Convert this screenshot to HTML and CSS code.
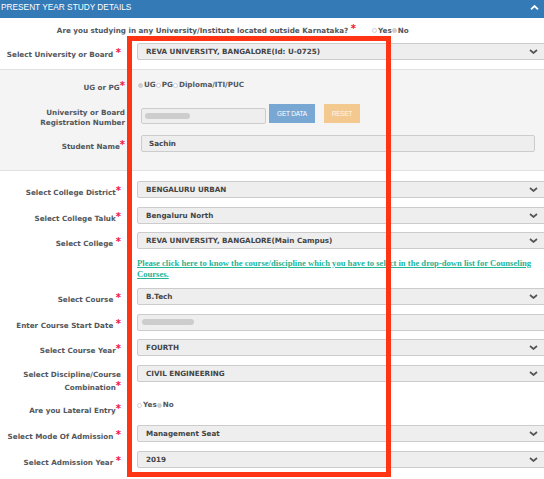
FILE: index.html
```html
<!DOCTYPE html>
<html>
<head>
<meta charset="utf-8">
<title>Present Year Study Details</title>
<link rel="stylesheet" href="styles.css">
</head>
<body>
<div class="panel">
  <div class="panel-head">
    <span class="title">PRESENT YEAR STUDY DETAILS</span>
    <svg class="collapse" viewBox="0 0 9 5"><polyline points="1,4.3 4.5,1 8,4.3" fill="none" stroke="#fff" stroke-width="1.8"/></svg>
  </div>

  <div class="q-row">
    <div class="q-text">Are you studying in any University/Institute located outside Karnataka? <span class="req">*</span></div>
    <div class="radios q-radios"><span class="radio"></span>Yes<span class="radio on"></span>No</div>
  </div>

  <div class="row row-univ">
    <div class="lbl">Select University or Board <span class="req">*</span></div>
    <div class="fld"><div class="sel"><span>REVA UNIVERSITY, BANGALORE(Id: U-0725)</span><svg class="chev" viewBox="0 0 9 5"><polyline points="1,1 4.5,4 8,1" fill="none" stroke="#555" stroke-width="1.7"/></svg></div></div>
  </div>

  <div class="gray">
    <div class="g-row g-ug">
      <div class="g-lbl">UG or PG<span class="req">*</span></div>
      <div class="g-fld"><div class="radios ug-radios"><span class="radio on"></span>UG<span class="radio"></span>PG<span class="radio"></span>Diploma/ITI/PUC</div></div>
    </div>
    <div class="g-row g-reg">
      <div class="g-lbl">University or Board<br>Registration Number</div>
      <div class="g-fld reg-fld">
        <div class="inp inp-reg"><span class="pill pill-reg"></span></div>
        <div class="btn btn-get">GET DATA</div>
        <div class="btn btn-reset">RESET</div>
      </div>
    </div>
    <div class="g-row g-name">
      <div class="g-lbl">Student Name<span class="req">*</span></div>
      <div class="g-fld"><div class="inp inp-name">Sachin</div></div>
    </div>
  </div>

  <div class="row">
    <div class="lbl">Select College District<span class="req">*</span></div>
    <div class="fld"><div class="sel"><span>BENGALURU URBAN</span><svg class="chev" viewBox="0 0 9 5"><polyline points="1,1 4.5,4 8,1" fill="none" stroke="#555" stroke-width="1.7"/></svg></div></div>
  </div>
  <div class="row">
    <div class="lbl">Select College Taluk<span class="req">*</span></div>
    <div class="fld"><div class="sel"><span>Bengaluru North</span><svg class="chev" viewBox="0 0 9 5"><polyline points="1,1 4.5,4 8,1" fill="none" stroke="#555" stroke-width="1.7"/></svg></div></div>
  </div>
  <div class="row">
    <div class="lbl">Select College <span class="req">*</span></div>
    <div class="fld"><div class="sel"><span>REVA UNIVERSITY, BANGALORE(Main Campus)</span><svg class="chev" viewBox="0 0 9 5"><polyline points="1,1 4.5,4 8,1" fill="none" stroke="#555" stroke-width="1.7"/></svg></div></div>
  </div>

  <a class="note" href="#">Please click here to know the course/discipline which you have to select in the drop-down list for Counseling<br>Courses.</a>

  <div class="row">
    <div class="lbl">Select Course <span class="req">*</span></div>
    <div class="fld"><div class="sel"><span>B.Tech</span><svg class="chev" viewBox="0 0 9 5"><polyline points="1,1 4.5,4 8,1" fill="none" stroke="#555" stroke-width="1.7"/></svg></div></div>
  </div>
  <div class="row">
    <div class="lbl">Enter Course Start Date <span class="req">*</span></div>
    <div class="fld"><div class="sel sel-date"><span class="pill pill-date"></span></div></div>
  </div>
  <div class="row">
    <div class="lbl">Select Course Year<span class="req">*</span></div>
    <div class="fld"><div class="sel"><span>FOURTH</span><svg class="chev" viewBox="0 0 9 5"><polyline points="1,1 4.5,4 8,1" fill="none" stroke="#555" stroke-width="1.7"/></svg></div></div>
  </div>
  <div class="row">
    <div class="lbl lbl-two">Select Discipline/Course<br>Combination<span class="req">*</span></div>
    <div class="fld"><div class="sel"><span>CIVIL ENGINEERING</span><svg class="chev" viewBox="0 0 9 5"><polyline points="1,1 4.5,4 8,1" fill="none" stroke="#555" stroke-width="1.7"/></svg></div></div>
  </div>
  <div class="row row-lateral">
    <div class="lbl lbl-lateral">Are you Lateral Entry<span class="req">*</span></div>
    <div class="fld"><div class="radios lat-radios"><span class="radio"></span>Yes<span class="radio on"></span>No</div></div>
  </div>
  <div class="row">
    <div class="lbl">Select Mode Of Admission <span class="req">*</span></div>
    <div class="fld"><div class="sel"><span>Management Seat</span><svg class="chev" viewBox="0 0 9 5"><polyline points="1,1 4.5,4 8,1" fill="none" stroke="#555" stroke-width="1.7"/></svg></div></div>
  </div>
  <div class="row">
    <div class="lbl">Select Admission Year <span class="req">*</span></div>
    <div class="fld"><div class="sel"><span>2019</span><svg class="chev" viewBox="0 0 9 5"><polyline points="1,1 4.5,4 8,1" fill="none" stroke="#555" stroke-width="1.7"/></svg></div></div>
  </div>
</div>

<div class="highlight"></div>
</body>
</html>
```

FILE: styles.css
```css
* { box-sizing: border-box; }
html, body { margin: 0; padding: 0; }
body {
  width: 544px;
  height: 479px;
  overflow: hidden;
  position: relative;
  background: #fff;
  font-family: "DejaVu Sans", Verdana, sans-serif;
  font-size: 7.2px;
  font-weight: bold;
  color: #52575d;
}

/* header */
.panel-head {
  height: 18px;
  background: #337ab7;
  color: #fff;
  display: flex;
  justify-content: space-between;
  align-items: flex-start;
  padding: 1.5px 5px 0 1px;
}
.title {
  font-family: "Liberation Sans", Arial, sans-serif;
  font-weight: normal;
  font-size: 8.3px;
  line-height: 10px;
}
.collapse { width: 9px; height: 5px; margin-top: 3.5px; }

/* question row */
.q-row { display: flex; height: 25px; }
.q-text { width: 356px; text-align: right; padding-top: 7px; line-height: 12px; }
.q-radios { margin-left: 16px; line-height: 12px; }

.req {
  color: #f0143c;
  font-size: 10px;
  line-height: 0;
  vertical-align: 1px;
}

/* radios */
.radios { display: flex; align-items: center; white-space: nowrap; }
.radio {
  width: 5px;
  height: 5px;
  border-radius: 50%;
  border: 1px solid #cfcfcf;
  background: #fff;
  margin-right: 1px;
  flex: none;
}
.radio.on { background: #cdcdcd; border-color: #cdcdcd; }

/* standard rows */
.row { display: flex; height: 17px; margin-bottom: 8.5px; }
.row-univ { margin-bottom: 9px; }
.lbl {
  flex: none;
  width: 121px;
  text-align: right;
  padding-top: 6px;
  line-height: 12px;
  white-space: nowrap;
}
.lbl-two { padding-top: 3px; line-height: 13px; }
.fld { flex: 1; min-width: 0; margin-left: 16px; margin-right: -3px; }

.sel {
  height: 17px;
  display: flex;
  align-items: center;
  justify-content: space-between;
  background: #eeeeee;
  border: 1px solid #cccccc;
  border-radius: 2px;
  padding: 0 8px 0 8px;
  color: #444;
  white-space: nowrap;
}
.sel-date { justify-content: flex-start; padding-left: 4px; }
.chev { width: 9px; height: 5px; flex: none; }

.pill { display: block; height: 6px; border-radius: 3px; background: #cdcdcd; }
.pill-date { width: 52px; }
.pill-reg { width: 45px; }

/* gray block */
.gray {
  background: #f4f4f4;
  border-top: 1px solid #e2e2e2;
  border-bottom: 1px solid #e2e2e2;
  padding: 9px 0 18px;
  margin-bottom: 10px;
}
.g-row { display: flex; }
.g-lbl { flex: none; width: 125px; text-align: right; white-space: nowrap; }
.g-fld { flex: 1; margin-left: 16px; }

.g-ug { height: 25px; }
.g-ug .g-lbl { padding-top: 3px; line-height: 12px; }
.ug-radios { margin-left: -3px; line-height: 12px; }

.g-reg { height: 31px; }
.g-reg .g-lbl { padding-top: 4px; line-height: 10px; }
.reg-fld { display: flex; align-items: flex-start; }

.g-name { height: 17px; }
.g-name .g-lbl { padding-top: 6px; line-height: 12px; }

.inp {
  background: #eeeeee;
  border: 1px solid #cccccc;
  border-radius: 2px;
  display: flex;
  align-items: center;
  color: #444;
}
.inp-reg { width: 125px; height: 16px; margin-top: 4px; padding-left: 3px; }
.inp-name { width: 394px; height: 17px; padding-left: 7px; }

.btn {
  height: 19px;
  display: flex;
  align-items: center;
  justify-content: center;
  color: #fff;
  font-family: "Liberation Sans", Arial, sans-serif;
  font-weight: normal;
  font-size: 6.5px;
  letter-spacing: -0.2px;
}
.btn-get { width: 46px; margin-left: 3px; background: #79a7d3; }
.btn-reset { width: 36px; margin-left: 9px; background: #f3c98f; color: #fdf5ea; }

/* note link */
.note {
  display: block;
  margin: 0 0 8.5px 137px;
  font-family: "Liberation Serif", "Times New Roman", serif;
  font-weight: bold;
  font-size: 8.6px;
  line-height: 11px;
  color: #22b598;
  text-decoration: underline;
  white-space: nowrap;
}

/* lateral entry */
.row-lateral { height: 35px; margin-bottom: 0; }
.lbl-lateral { padding-top: 15px; }
.lat-radios { padding-top: 9px; line-height: 12px; }

/* highlight overlay */
.highlight {
  position: absolute;
  left: 127px;
  top: 36px;
  width: 264px;
  height: 441px;
  border: 5px solid #ff3414;
}
```
